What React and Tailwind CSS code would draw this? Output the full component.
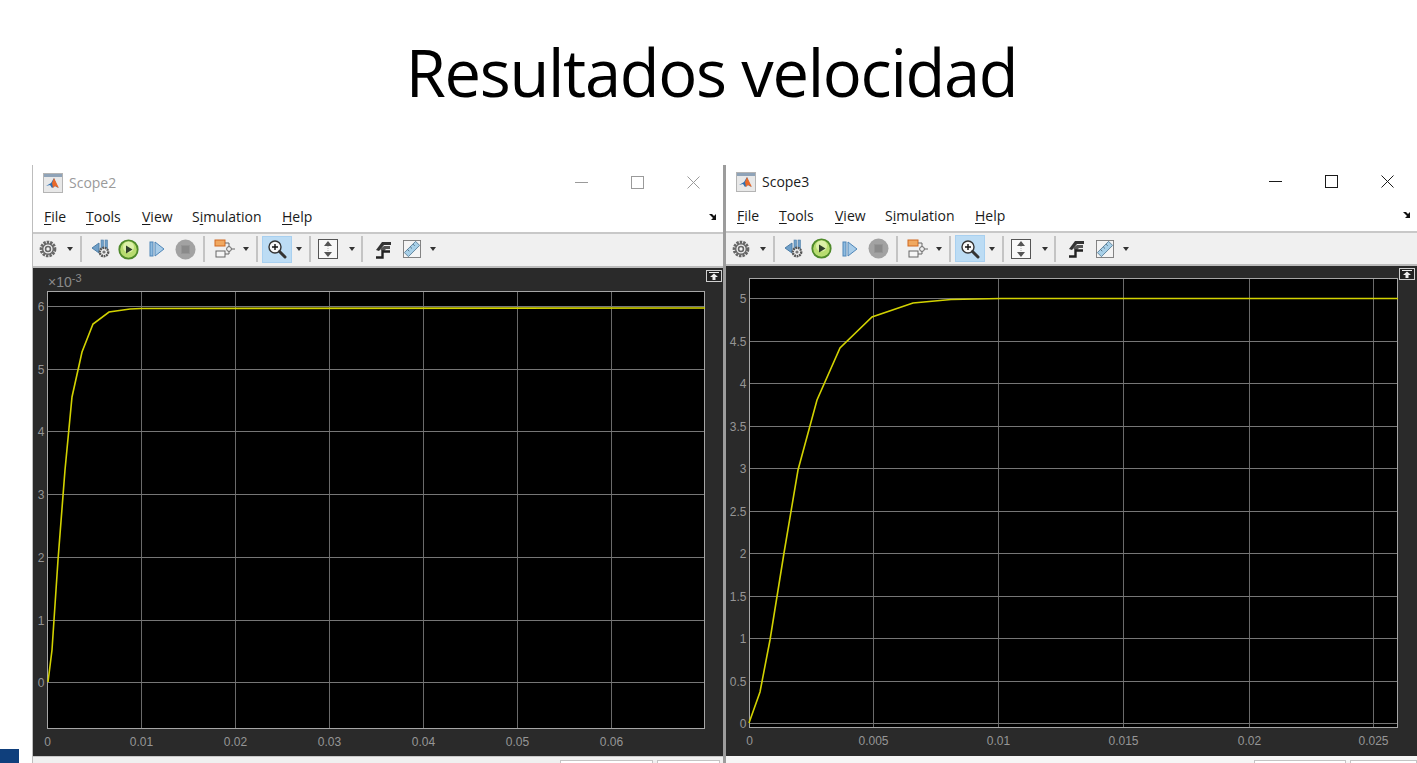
import React from 'react';

const uiFont = { fontFamily: '"Open Sans", "Noto Sans", sans-serif' };

const MatlabIcon = () => (
  <svg width="20" height="20" viewBox="0 0 20 20">
    <rect x="0.5" y="0.5" width="19" height="19" fill="#e8e8e8" stroke="#b4b4b4" />
    <rect x="1" y="1" width="18" height="3" fill="#8fa3b8" />
    <path d="M3 13 L8 10 L11 5 L15 15 L12 13 L9 15 L7 12 Z" fill="#2f6fb0" />
    <path d="M11 5 L13 9 L16 15 L12 13 L10 15 L9 10 Z" fill="#e8692a" />
  </svg>
);

const Caret = () => <span className="w-0 h-0 border-x-[3px] border-x-transparent border-t-[4px] border-t-[#333]" />;

const Sep = ({ className }) => <span className={`w-[2px] h-[26px] bg-[#c4c4c4] ${className || ''}`} />;

const Tool = ({ width, children, className }) => (
  <span className={`flex items-center justify-center shrink-0 ${width} ${className || ''}`}>{children}</span>
);

const Gear = ({ size = 20, color = '#666' }) => (
  <svg width={size} height={size} viewBox="0 0 18 18">
    <circle cx="9" cy="9" r="6.2" fill="none" stroke={color} strokeWidth="2.6" strokeDasharray="2.2 0.9" />
    <circle cx="9" cy="9" r="4.8" fill="#f0f0f0" stroke={color} strokeWidth="1.3" />
    <circle cx="9" cy="9" r="2.2" fill="none" stroke={color} strokeWidth="1.4" />
  </svg>
);

const Toolbar = ({ className }) => (
  <div className={`flex items-center bg-[#f0f0f0] pl-[3px] ${className}`}>
    <Tool width="w-[24px]"><Gear /></Tool>
    <Tool width="w-[20px]"><Caret /></Tool>
    <Sep />
    <Tool width="w-[26px]" className="ml-[7px]">
      <svg width="22" height="20" viewBox="0 0 22 20">
        <path d="M1 9 L8 4 V14 Z" fill="#6f9fc8" stroke="#4f7fa8" />
        <rect x="10" y="1" width="2.5" height="9" fill="#6f9fc8" stroke="#4f7fa8" strokeWidth="0.6" />
        <rect x="14" y="1" width="2.5" height="9" fill="#6f9fc8" stroke="#4f7fa8" strokeWidth="0.6" />
        <circle cx="13" cy="13" r="4.2" fill="#f0f0f0" stroke="#555" strokeWidth="2.4" strokeDasharray="1.8 0.7" />
        <circle cx="13" cy="13" r="1.6" fill="#777" />
      </svg>
    </Tool>
    <Tool width="w-[26px]">
      <svg width="21" height="21" viewBox="0 0 21 21">
        <circle cx="10.5" cy="10.5" r="9.2" fill="#b8dc70" stroke="#4f8a2a" strokeWidth="1.8" />
        <circle cx="10.5" cy="8" r="5.5" fill="#dcf0a8" />
        <path d="M8 6.5 L14.5 10.5 L8 14.5 Z" fill="#2f3f2a" />
      </svg>
    </Tool>
    <Tool width="w-[32px]">
      <svg width="16" height="16" viewBox="0 0 16 16">
        <rect x="1" y="1" width="3" height="14" fill="#8fbce0" stroke="#4f86b8" />
        <path d="M6 1 L15 8 L6 15 Z" fill="#a8cce8" stroke="#4f86b8" />
      </svg>
    </Tool>
    <Tool width="w-[24px]">
      <svg width="21" height="21" viewBox="0 0 21 21">
        <circle cx="10.5" cy="10.5" r="10" fill="#a2a2a2" />
        <rect x="6.5" y="6.5" width="8" height="8" fill="#8a8a8a" stroke="#969696" />
      </svg>
    </Tool>
    <Sep className="ml-[6px]" />
    <Tool width="w-[34px]" className="ml-[3px]">
      <svg width="22" height="20" viewBox="0 0 22 20">
        <rect x="1" y="1" width="10" height="6" fill="#f0a860" stroke="#d06820" />
        <path d="M11 4 H15 V8 M15 12 V15 H11" fill="none" stroke="#666" />
        <circle cx="15" cy="10" r="2.4" fill="#f0f0f0" stroke="#666" />
        <path d="M17.4 10 H21" stroke="#666" />
        <rect x="2" y="12" width="9" height="6" fill="#f5f5f5" stroke="#666" />
      </svg>
    </Tool>
    <Tool width="w-[8px]"><Caret /></Tool>
    <Sep className="ml-[6px]" />
    <Tool width="w-[30px]" className="ml-[4px] h-[27px] bg-[#bcdcf4] border border-[#a8d0f0]">
      <svg width="20" height="20" viewBox="0 0 20 20">
        <circle cx="8" cy="8" r="6" fill="#f8f8f8" stroke="#333" strokeWidth="1.4" />
        <path d="M5 8 H11 M8 5 V11" stroke="#111" strokeWidth="1.4" />
        <path d="M12.5 12.5 L18 18" stroke="#333" strokeWidth="3" strokeLinecap="round" />
      </svg>
    </Tool>
    <Tool width="w-[14px]"><Caret /></Tool>
    <Sep className="ml-[3px]" />
    <Tool width="w-[34px]">
      <svg width="20" height="20" viewBox="0 0 20 20">
        <rect x="0.5" y="0.5" width="19" height="19" fill="#f8f8f8" stroke="#555" />
        <path d="M10 2 L14 7 H6 Z M10 18 L14 13 H6 Z" fill="#555" />
        <path d="M10 7 V13" stroke="#aaa" strokeDasharray="1 1" />
      </svg>
    </Tool>
    <Tool width="w-[14px]"><Caret /></Tool>
    <Sep className="ml-[2px]" />
    <Tool width="w-[40px]">
      <svg width="17" height="19" viewBox="0 0 17 19">
        <path d="M1 10 L7 2 H16 V5 H9 L4 11 Z" fill="#333" />
        <path d="M5 9 L9 6 H15 V9 H11 L8 12 Z" fill="#555" />
        <path d="M1 17.5 H7.5 V11.5 H15" fill="none" stroke="#222" strokeWidth="2.4" />
      </svg>
    </Tool>
    <Tool width="w-[18px]">
      <svg width="20" height="20" viewBox="0 0 20 20">
        <rect x="0.5" y="0.5" width="19" height="19" fill="#f4f4f4" stroke="#777" />
        <path d="M1.5 14 L14 1.5 L18.5 6 L6 18.5 Z" fill="#a8d0e8" stroke="#5a7f98" />
        <path d="M5 10.5 L7 12.5 M8 7.5 L10 9.5 M11 4.5 L13 6.5" stroke="#4a6a80" />
      </svg>
    </Tool>
    <Tool width="w-[24px]"><Caret /></Tool>
  </div>
);

const MenuItem = ({ before, mark, after, className }) => (
  <span className={className}>
    {before}<span className="underline underline-offset-2">{mark}</span>{after}
  </span>
);

const MenuBar = ({ className }) => (
  <div className={`flex items-center justify-between bg-white pl-[11px] pr-[5px] text-[14px] text-[#1a1a1a] ${className}`} style={uiFont}>
    <div className="flex">
      <MenuItem mark="F" after="ile" className="w-[42px]" />
      <MenuItem mark="T" after="ools" className="w-[56px]" />
      <MenuItem mark="V" after="iew" className="w-[50px]" />
      <MenuItem before="S" mark="i" after="mulation" className="w-[90px]" />
      <MenuItem mark="H" after="elp" />
    </div>
    <svg width="9" height="8" viewBox="0 0 9 8">
      <path d="M0 1 H3 L5 3 L7 1 V7 H2 L4 5 Z" fill="#111" />
    </svg>
  </div>
);

const TitleBar = ({ name, active, className }) => {
  const tone = active ? '#1a1a1a' : '#9a9a9a';
  return (
    <div className={`flex items-center justify-between bg-white pl-[10px] pr-[2px] ${className}`}>
      <div className="flex items-center gap-[6px]">
        <MatlabIcon />
        <span className="text-[14px]" style={{ ...uiFont, color: tone }}>{name}</span>
      </div>
      <div className="flex">
        <span className="w-[56px] flex justify-center">
          <svg width="13" height="13" viewBox="0 0 13 13"><path d="M0 6.5 H13" stroke={tone} /></svg>
        </span>
        <span className="w-[56px] flex justify-center">
          <svg width="13" height="13" viewBox="0 0 13 13"><rect x="0.5" y="0.5" width="12" height="12" fill="none" stroke={tone} /></svg>
        </span>
        <span className="w-[56px] flex justify-center">
          <svg width="13" height="13" viewBox="0 0 13 13"><path d="M0.5 0.5 L12.5 12.5 M12.5 0.5 L0.5 12.5" stroke={tone} /></svg>
        </span>
      </div>
    </div>
  );
};

// all coordinates relative to the dark plot area
const Plot = ({ width, height, frame, xTicks, yTicks, curve, exponent, undockX }) => (
  <svg width={width} height={height} className="block bg-[#2a2a2a]" style={{ fontFamily: '"Liberation Sans", Arial, sans-serif' }}>
    <rect x={frame.x} y={frame.y} width={frame.w} height={frame.h} fill="#000" />
    {xTicks.slice(1).map(([label, x]) => (
      <line key={label} x1={x} x2={x} y1={frame.y} y2={frame.y + frame.h} stroke="#6a6a6a" />
    ))}
    {yTicks.map(([label, y]) => (
      <line key={label} x1={frame.x} x2={frame.x + frame.w} y1={y} y2={y} stroke="#767676" />
    ))}
    <rect x={frame.x} y={frame.y} width={frame.w} height={frame.h} fill="none" stroke="#a6a6a6" />
    <polyline points={curve} fill="none" stroke="#d2d200" strokeWidth="1.6" />
    {xTicks.map(([label, x]) => (
      <text key={label} x={x} y={frame.y + frame.h + 17} textAnchor="middle" fontSize="12" fill="#969696">{label}</text>
    ))}
    {yTicks.map(([label, y]) => (
      <text key={label} x={frame.x - 3} y={y + 4} textAnchor="end" fontSize="12" fill="#969696">{label}</text>
    ))}
    {exponent && (
      <text x={15} y={19} fontSize="14" fill="#8a8a8a">
        ×10<tspan dy="-5" fontSize="11">-3</tspan>
      </text>
    )}
    <g transform={`translate(${undockX} 2)`}>
      <rect x="0.5" y="0.5" width="15" height="11" fill="#222" stroke="#cfcfcf" />
      <path d="M3 2.5 H13" stroke="#eee" />
      <path d="M8 3.5 L12 7 H9.5 V10 H6.5 V7 H4 Z" fill="#eee" />
    </g>
  </svg>
);

const StatusBar = ({ className, panels }) => (
  <div className={`flex items-end bg-[#f0f0f0] ${className}`}>
    {panels.map((p) => (
      <span key={p} className={`h-[3px] bg-white border-t border-x border-[#c4c4c4] ${p}`} />
    ))}
  </div>
);

const leftPlot = {
  frame: { x: 14.5, y: 23.5, w: 657, h: 437 },
  xTicks: [['0', 14.5], ['0.01', 108.5], ['0.02', 202.5], ['0.03', 296.5], ['0.04', 390.5], ['0.05', 484.5], ['0.06', 578.5]],
  yTicks: [['6', 38.5], ['5', 101.5], ['4', 163.5], ['3', 226.5], ['2', 289.5], ['1', 352.5], ['0', 414.5]],
  curve: '15,414 19,382 25,292 32,202 39,129 49,84 60,56 76,44 97,41 108,40.5 672,40',
};

const rightPlot = {
  frame: { x: 23.5, y: 12.5, w: 648, h: 449 },
  xTicks: [['0', 23.5], ['0.005', 147.5], ['0.01', 272.5], ['0.015', 397.5], ['0.02', 523.5], ['0.025', 647.5]],
  yTicks: [['5', 32.5], ['4.5', 75.5], ['4', 117.5], ['3.5', 160.5], ['3', 202.5], ['2.5', 245.5], ['2', 287.5], ['1.5', 330.5], ['1', 372.5], ['0.5', 415.5], ['0', 457.5]],
  curve: '23,457 34,426 44,374 58,287 72,204 91,134 114,82 146,51 187,37 225,33.5 275,32.5 672,32.5',
};

const App = () => {
  return (
    <div className="w-[1417px] h-[763px] overflow-hidden bg-white flex flex-col">
      <header className="h-[165px] shrink-0 flex justify-center pt-[30px] pl-[6px]">
        <h1 className="text-[65px] leading-[84px] text-black tracking-[-1.3px]" style={{ fontFamily: '"Open Sans", "Noto Sans", sans-serif' }}>
          Resultados velocidad
        </h1>
      </header>
      <div className="flex flex-1 min-h-0">
        <div className="w-[32px] shrink-0 flex flex-col justify-end">
          <div className="w-[19px] h-[14px] bg-[#0f3f7c]" />
        </div>
        <section className="w-[691px] shrink-0 border-l border-[#bdbdbd] flex flex-col">
          <TitleBar name="Scope2" className="h-[35px]" />
          <MenuBar className="h-[31px] pt-px border-b-2 border-[#c8c8c8] box-content" />
          <Toolbar className="h-[30px] pb-[2px] border-b-2 border-[#bcbcbc] box-content" />
          <Plot width={690} height={488} undockX={673} exponent {...leftPlot} />
          <StatusBar className="flex-1 border-t border-[#c8c8c8]" panels={['w-[93px] ml-[527px]', 'w-[63px] ml-[4px]']} />
        </section>
        <div className="w-[3px] shrink-0 bg-[#9c9c9c]" />
        <section className="w-[691px] shrink-0 flex flex-col">
          <TitleBar name="Scope3" active className="h-[33px]" />
          <MenuBar className="h-[32px] pt-px border-b-2 border-[#c8c8c8] box-content" />
          <Toolbar className="h-[31px] border-b-2 border-[#bcbcbc] box-content" />
          <Plot width={691} height={490} undockX={673} {...rightPlot} />
          <StatusBar className="flex-1 bg-[#f6f6f6]" panels={['w-[92px] ml-[528px]', 'w-[67px] ml-[4px]']} />
        </section>
      </div>
    </div>
  );
};

export default App;
